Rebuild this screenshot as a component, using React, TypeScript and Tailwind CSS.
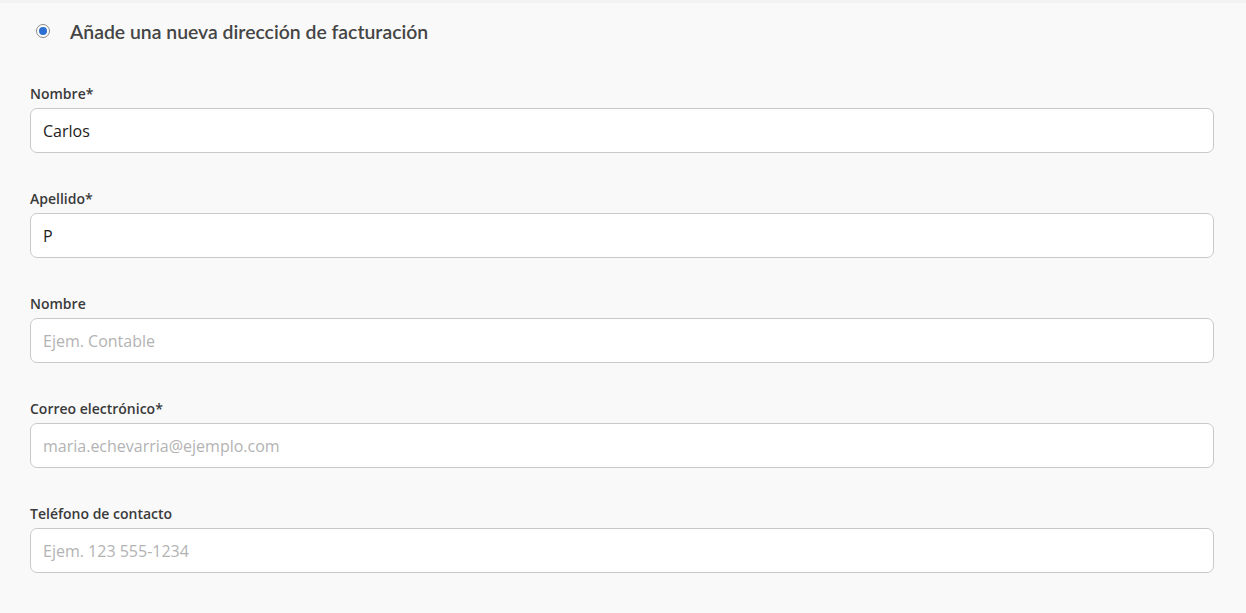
const fields = [
  { label: "Nombre*", value: "Carlos", placeholder: "" },
  { label: "Apellido*", value: "P", placeholder: "" },
  { label: "Nombre", value: "", placeholder: "Ejem. Contable" },
  { label: "Correo electrónico*", value: "", placeholder: "maria.echevarria@ejemplo.com" },
  { label: "Teléfono de contacto", value: "", placeholder: "Ejem. 123 555-1234" },
];

function Field({ label, value, placeholder }: { label: string; value: string; placeholder: string }) {
  return (
    <div className="flex flex-col">
      <label className="h-[20px] text-[14px] leading-[20px] font-semibold text-[#3a3a3a]">{label}</label>
      <input
        readOnly
        value={value}
        placeholder={placeholder}
        className="mt-[4px] h-[45px] w-full rounded-[7px] border border-[#c9c9c9] bg-white px-[12px] text-[16px] text-[#1c1c1c] outline-none placeholder:text-[#b3b3b3]"
      />
    </div>
  );
}

export default function App() {
  return (
    <div className="min-h-[613px] w-full bg-[#f3f3f3] pt-[3px] font-['Open_Sans',sans-serif]">
      <div className="min-h-[610px] bg-[#f9f9f9] px-[30px]">
        <div className="flex h-[60px] items-center pl-[6px]">
          <span className="mb-[4px] flex h-[14px] w-[14px] items-center justify-center rounded-full border border-[#8a8a8a] bg-white">
            <span className="h-[8px] w-[8px] rounded-full bg-[#2a6fd1]" />
          </span>
          <span className="mb-[2px] ml-[20px] font-['Lato',sans-serif] text-[19.4px] font-semibold text-[#454545]">
            Añade una nueva dirección de facturación
          </span>
        </div>
        <div className="mt-[21px] flex flex-col gap-[36px] pr-[2px]">
          {fields.map((f) => (
            <Field key={f.label + f.placeholder} {...f} />
          ))}
        </div>
      </div>
    </div>
  );
}
